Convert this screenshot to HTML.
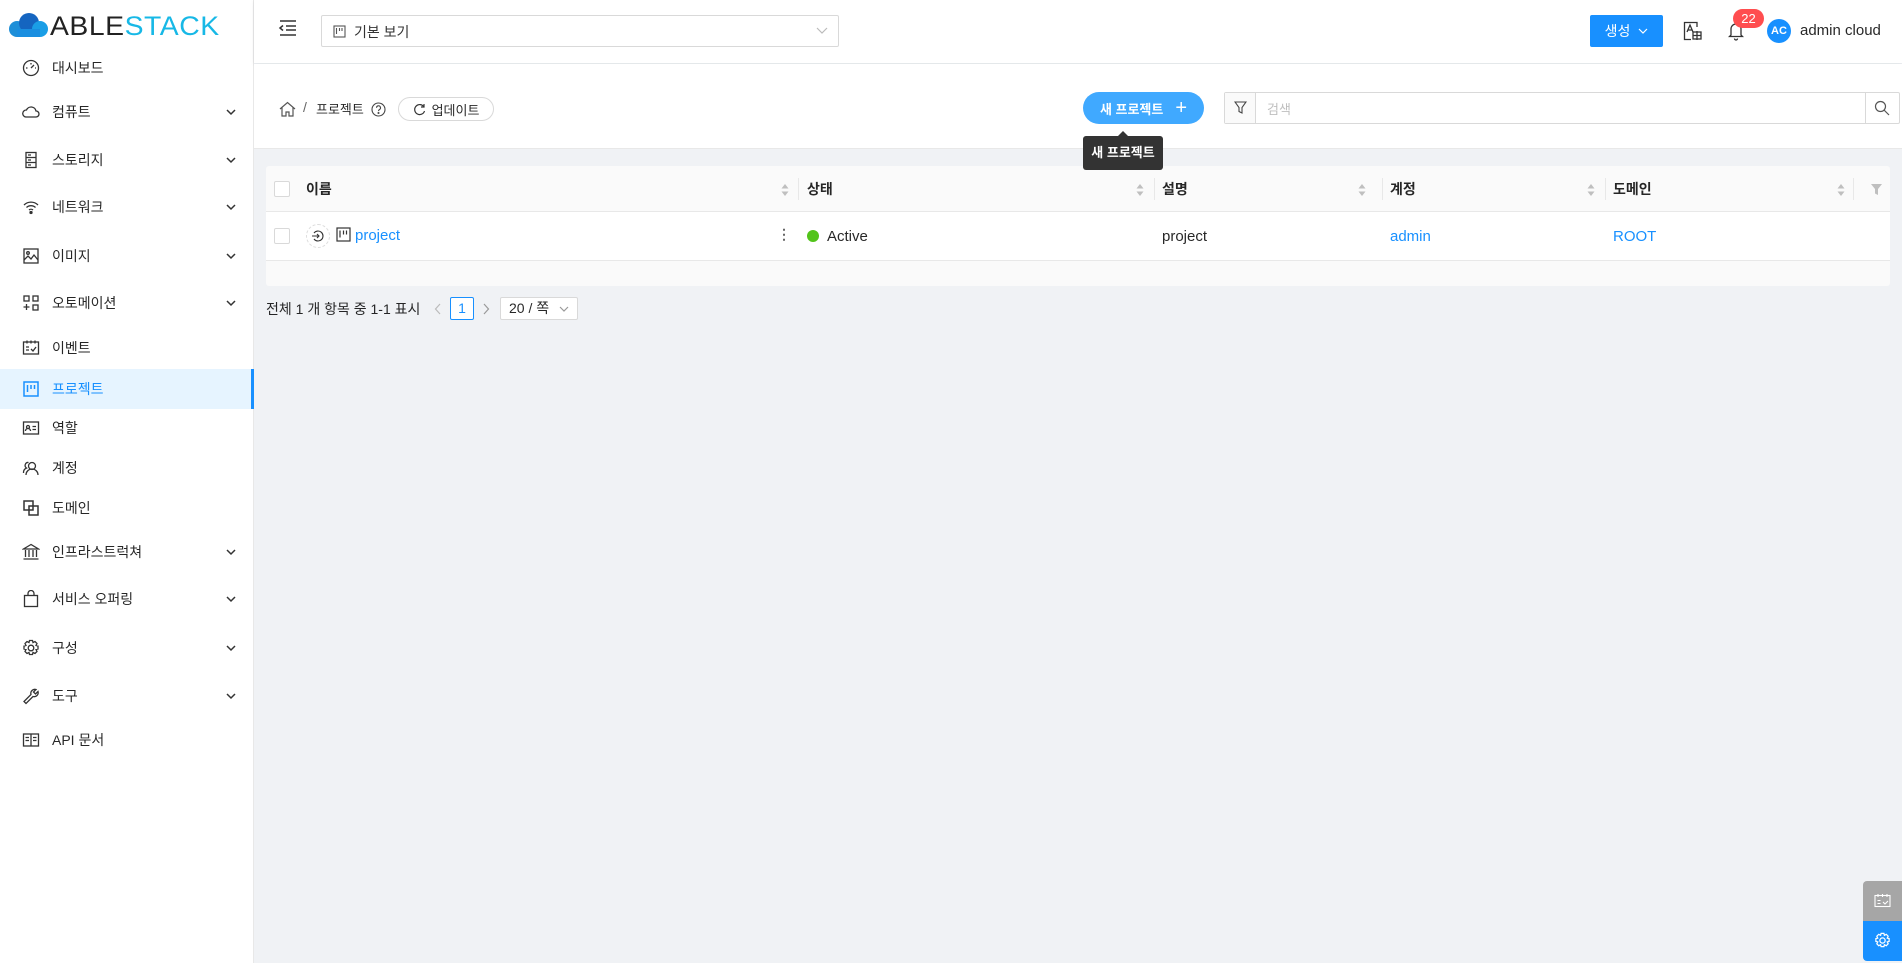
<!DOCTYPE html>
<html><head><meta charset="utf-8"><style>
*{box-sizing:border-box;margin:0;padding:0}
body{width:1902px;height:963px;overflow:hidden;background:#f0f2f5;font-family:"Liberation Sans","Noto Sans CJK KR",sans-serif;font-size:14px;color:rgba(0,0,0,.85);position:relative}
.a{position:absolute}
.side{left:0;top:0;width:254px;height:963px;background:#fff;border-right:1px solid #e8e8e8}
.mi{position:absolute;left:0;width:254px;height:40px;display:flex;align-items:center}
.mi svg{position:absolute;left:22px;width:18px;height:18px}
.mi span{position:absolute;left:52px;font-size:14px}
.mi .ch{position:absolute;left:226px;width:10px;height:10px}
.hdr{left:254px;top:0;width:1648px;height:63px;background:#fff;box-shadow:0 1px 4px rgba(0,21,41,.08)}
.top2{left:254px;top:64px;width:1648px;height:85px;background:#fff;border-bottom:1px solid #e8e8e8}
.th{position:absolute;top:0;height:46px;display:flex;align-items:center;font-weight:bold;font-size:14px}
.sort{position:absolute;top:18px;width:8px;height:12px}
.div{position:absolute;top:12px;width:1px;height:22px;background:#e8e8e8}
.cb{position:absolute;width:16px;height:16px;border:1px solid #d9d9d9;border-radius:2px;background:#fff}
.link{color:#1890ff}
</style></head><body>

<div class="a side">
 <svg class="a" style="left:8px;top:12px" width="42" height="26" viewBox="0 0 42 26"><circle cx="9" cy="17" r="8" fill="#1e8fd8"/><circle cx="21" cy="11" r="10" fill="#1565c0"/><circle cx="32" cy="17" r="8" fill="#1a9ee6"/><rect x="9" y="17" width="23" height="8" fill="#1a8ee0"/></svg>
 <div class="a" style="left:50px;top:11px;font-size:27px;font-weight:normal;letter-spacing:0.5px;line-height:30px;transform:scaleX(1.05);transform-origin:left"><span style="color:#222">ABLE</span><span style="color:#17b8e6">STACK</span></div>

 <div class="mi" style="top:48px"><svg viewBox="0 0 18 18" fill="none" stroke="#333" stroke-width="1.3"><circle cx="9" cy="9" r="7.5"/><path d="M9 9l3-3M4 9h1.5M13 9h1M9 4v1.5"/></svg><span>대시보드</span></div>
 <div class="mi" style="top:92px"><svg viewBox="0 0 18 18" fill="none" stroke="#333" stroke-width="1.3"><path d="M4 14h10a3 3 0 000-6 5 5 0 00-9.5-1A3.5 3.5 0 004 14z"/></svg><span>컴퓨트</span><svg class="ch" viewBox="0 0 10 10" fill="none" stroke="#333" stroke-width="1.5"><path d="M1 3l4 4 4-4"/></svg></div>
 <div class="mi" style="top:140px"><svg viewBox="0 0 18 18" fill="none" stroke="#333" stroke-width="1.3"><rect x="4" y="1.5" width="10" height="15"/><path d="M4 6.5h10M4 11.5h10M6 4h3M6 9h3M6 14h3"/></svg><span>스토리지</span><svg class="ch" viewBox="0 0 10 10" fill="none" stroke="#333" stroke-width="1.5"><path d="M1 3l4 4 4-4"/></svg></div>
 <div class="mi" style="top:187px"><svg viewBox="0 0 18 18" fill="none" stroke="#333" stroke-width="1.3"><path d="M2 7a10 10 0 0114 0M4.5 9.5a6.5 6.5 0 019 0M7 12a3 3 0 014 0"/><circle cx="9" cy="14.5" r="1" fill="#333"/></svg><span>네트워크</span><svg class="ch" viewBox="0 0 10 10" fill="none" stroke="#333" stroke-width="1.5"><path d="M1 3l4 4 4-4"/></svg></div>
 <div class="mi" style="top:236px"><svg viewBox="0 0 18 18" fill="none" stroke="#333" stroke-width="1.3"><rect x="2" y="2" width="14" height="14"/><path d="M2 13l4-4 3 3 3-4 4 5"/><circle cx="6" cy="6" r="1.3"/></svg><span>이미지</span><svg class="ch" viewBox="0 0 10 10" fill="none" stroke="#333" stroke-width="1.5"><path d="M1 3l4 4 4-4"/></svg></div>
 <div class="mi" style="top:283px"><svg viewBox="0 0 18 18" fill="none" stroke="#333" stroke-width="1.3"><rect x="2" y="2" width="5" height="5"/><rect x="11" y="2" width="5" height="5"/><rect x="11" y="11" width="5" height="5"/><path d="M4.5 10v6M1.5 13h6"/></svg><span>오토메이션</span><svg class="ch" viewBox="0 0 10 10" fill="none" stroke="#333" stroke-width="1.5"><path d="M1 3l4 4 4-4"/></svg></div>
 <div class="mi" style="top:328px"><svg viewBox="0 0 18 18" fill="none" stroke="#333" stroke-width="1.3"><rect x="1.5" y="3" width="15" height="12"/><path d="M5 1.5v3M9 1.5v3M13 1.5v3M4 8h3M4 11h3M9 10l2 2 3-4"/></svg><span>이벤트</span></div>
 <div class="a" style="left:0;top:369px;width:254px;height:40px;background:#e6f4ff;border-right:3px solid #1890ff"></div>
 <div class="mi" style="top:369px"><svg viewBox="0 0 18 18" fill="none" stroke="#1890ff" stroke-width="1.5"><rect x="2" y="2" width="14" height="14"/><path d="M5.5 5v7M9 5v4M12.5 5v4"/></svg><span style="color:#1890ff">프로젝트</span></div>
 <div class="mi" style="top:408px"><svg viewBox="0 0 18 18" fill="none" stroke="#333" stroke-width="1.3"><rect x="1.5" y="3" width="15" height="12"/><circle cx="6" cy="8" r="1.5"/><path d="M3.5 12a2.5 2.5 0 015 0M10.5 7.5h3.5M10.5 10.5h3.5"/></svg><span>역할</span></div>
 <div class="mi" style="top:448px"><svg viewBox="0 0 18 18" fill="none" stroke="#333" stroke-width="1.3"><circle cx="10" cy="7" r="3.5"/><path d="M4 16a6 6 0 0112 0M6.5 3.5a3 3 0 00-2 5.5A5 5 0 001.5 14"/></svg><span>계정</span></div>
 <div class="mi" style="top:488px"><svg viewBox="0 0 18 18" fill="none" stroke="#333" stroke-width="1.5"><rect x="2" y="2" width="9" height="9"/><rect x="7" y="7" width="9" height="9"/></svg><span>도메인</span></div>
 <div class="mi" style="top:532px"><svg viewBox="0 0 18 18" fill="none" stroke="#333" stroke-width="1.3"><path d="M9 1.5L1.5 6h15zM3.5 7v7M7 7v7M11 7v7M14.5 7v7M1.5 16h15"/></svg><span>인프라스트럭쳐</span><svg class="ch" viewBox="0 0 10 10" fill="none" stroke="#333" stroke-width="1.5"><path d="M1 3l4 4 4-4"/></svg></div>
 <div class="mi" style="top:579px"><svg viewBox="0 0 18 18" fill="none" stroke="#333" stroke-width="1.3"><rect x="2.5" y="5.5" width="13" height="11"/><path d="M6 5.5V3.5a3 3 0 016 0v2"/></svg><span>서비스 오퍼링</span><svg class="ch" viewBox="0 0 10 10" fill="none" stroke="#333" stroke-width="1.5"><path d="M1 3l4 4 4-4"/></svg></div>
 <div class="mi" style="top:628px"><svg viewBox="0 0 18 18" fill="none" stroke="#333" stroke-width="1.3"><circle cx="9" cy="9" r="2.8"/><path d="M7.5 1.5h3l.5 2 2-1 2 2-1 2 2 .5v3l-2 .5 1 2-2 2-2-1-.5 2h-3l-.5-2-2 1-2-2 1-2-2-.5v-3l2-.5-1-2 2-2 2 1z"/></svg><span>구성</span><svg class="ch" viewBox="0 0 10 10" fill="none" stroke="#333" stroke-width="1.5"><path d="M1 3l4 4 4-4"/></svg></div>
 <div class="mi" style="top:676px"><svg viewBox="0 0 18 18" fill="none" stroke="#333" stroke-width="1.3"><path d="M2 14.5l7-7a4 4 0 015-5l-2.5 2.5 2 2L16 4.5a4 4 0 01-5 5l-7 7z"/></svg><span>도구</span><svg class="ch" viewBox="0 0 10 10" fill="none" stroke="#333" stroke-width="1.5"><path d="M1 3l4 4 4-4"/></svg></div>
 <div class="mi" style="top:720px"><svg viewBox="0 0 18 18" fill="none" stroke="#333" stroke-width="1.3"><rect x="1.5" y="3" width="15" height="12"/><path d="M9 3v12M3.5 6.5h3.5M3.5 9.5h3.5M11 6.5h3.5M11 9.5h3.5"/></svg><span>API 문서</span></div>
</div>

<div class="a hdr">
 <svg class="a" style="left:24px;top:19px" width="20" height="18" viewBox="0 0 20 18" fill="none" stroke="#333" stroke-width="1.5"><path d="M2 2h16M8 7h10M8 11h10M2 16h16M5 6.5L2 9l3 2.5"/></svg>
 <div class="a" style="left:67px;top:15px;width:518px;height:32px;border:1px solid #d9d9d9;border-radius:2px">
  <svg class="a" style="left:11px;top:9px" width="13" height="13" viewBox="0 0 13 13" fill="none" stroke="#555" stroke-width="1.1"><rect x="1" y="1" width="11" height="11"/><path d="M3.5 3v6M6.5 3v3M9 3v3"/></svg>
  <span class="a" style="left:32px;top:6px;color:#333">기본 보기</span>
  <svg class="a" style="right:10px;top:11px" width="12" height="8" viewBox="0 0 12 8" fill="none" stroke="#bbb" stroke-width="1.2"><path d="M1 1l5 5 5-5"/></svg>
 </div>
 <div class="a" style="left:1336px;top:15px;width:73px;height:32px;background:#1890ff;border-radius:2px;color:#fff;display:flex;align-items:center;justify-content:center;gap:8px">생성 <svg width="10" height="7" viewBox="0 0 10 7" fill="none" stroke="#fff" stroke-width="1.2"><path d="M1 1l4 4 4-4"/></svg></div>
 <svg class="a" style="left:1429px;top:21px" width="20" height="20" viewBox="0 0 20 20" fill="none" stroke="#333" stroke-width="1.3"><path d="M14 6V1.5H1.5v17H8"/><path d="M4 11l3-7 3 7M5 9h4"/><rect x="10" y="11" width="8" height="7"/><path d="M14 10v9M10 14.5h8"/></svg>
 <svg class="a" style="left:1474px;top:21px" width="16" height="20" viewBox="0 0 16 20" fill="none" stroke="#333" stroke-width="1.3"><path d="M3 14V8a5 5 0 0110 0v6l1.5 1.5h-13zM6.5 17.5a1.5 1.5 0 003 0"/></svg>
 <div class="a" style="left:1479px;top:9px;width:31px;height:19px;border-radius:10px;background:#ff4d4f;color:#fff;font-size:13px;text-align:center;line-height:19px">22</div>
 <div class="a" style="left:1513px;top:19px;width:24px;height:24px;border-radius:50%;background:#1890ff;color:#fff;font-size:11px;font-weight:bold;text-align:center;line-height:24px">AC</div>
 <span class="a" style="left:1546px;top:22px;font-size:15px">admin cloud</span>
</div>

<div class="a top2">
 <svg class="a" style="left:25px;top:37px" width="17" height="16" viewBox="0 0 17 16" fill="none" stroke="#555" stroke-width="1.2"><path d="M1 8l7.5-6.5L16 8M3 6.5V15h4v-4h3v4h4V6.5"/></svg>
 <span class="a" style="left:49px;top:35px;color:#666">/</span>
 <span class="a" style="left:62px;top:35px;font-size:13px">프로젝트</span>
 <svg class="a" style="left:117px;top:38px" width="15" height="15" viewBox="0 0 15 15" fill="none" stroke="#444" stroke-width="1.1"><circle cx="7.5" cy="7.5" r="6.5"/><path d="M5.5 5.8a2 2 0 113 1.7c-.8.4-1 .8-1 1.6"/><circle cx="7.5" cy="11" r=".5" fill="#444"/></svg>
 <div class="a" style="left:144px;top:33px;width:96px;height:24px;border:1px solid #d9d9d9;border-radius:12px;display:flex;align-items:center;justify-content:center;gap:6px;font-size:13px"><svg width="13" height="13" viewBox="0 0 13 13" fill="none" stroke="#333" stroke-width="1.2"><path d="M11 4a5 5 0 10.5 4M11 1v3H8"/></svg>업데이트</div>
 <div class="a" style="left:829px;top:28px;width:121px;height:32px;border-radius:16px;background:#40a9ff;color:#fff;font-weight:bold;font-size:13px;display:flex;align-items:center;justify-content:center;gap:12px">새 프로젝트 <span style="font-weight:normal;font-size:20px;line-height:10px">+</span></div>
 <div class="a" style="left:829px;top:72px;width:80px;height:34px;border-radius:3px;background:#333;color:#fff;font-size:13px;font-weight:bold;text-align:center;line-height:34px;z-index:2">새 프로젝트</div>
 <div class="a" style="left:864px;top:67px;width:0;height:0;border-left:5px solid transparent;border-right:5px solid transparent;border-bottom:5px solid #333"></div>
 <div class="a" style="left:970px;top:28px;width:676px;height:32px;border:1px solid #d9d9d9;border-radius:2px;background:#fff">
  <div class="a" style="left:0;top:0;width:31px;height:30px;border-right:1px solid #d9d9d9;background:#fafafa"></div>
  <svg class="a" style="left:9px;top:8px" width="13" height="14" viewBox="0 0 13 14" fill="none" stroke="#444" stroke-width="1.1"><path d="M1 1h11L8 6.5V12l-3-1.5v-4z"/></svg>
  <span class="a" style="left:42px;top:6px;color:#bfbfbf;font-size:13px">검색</span>
  <div class="a" style="right:0;top:0;width:34px;height:30px;border-left:1px solid #d9d9d9"></div>
  <svg class="a" style="right:9px;top:7px" width="16" height="16" viewBox="0 0 16 16" fill="none" stroke="#555" stroke-width="1.2"><circle cx="6.5" cy="6.5" r="5"/><path d="M10 10l5 5"/></svg>
 </div>
</div>

<div class="a" style="left:266px;top:166px;width:1624px;height:120px;background:#fafafa;border-radius:3px">
 <div class="a" style="left:0;top:0;width:1624px;height:46px;border-bottom:1px solid #e8e8e8"></div>
 <div class="cb" style="left:8px;top:15px"></div>
 <div class="th" style="left:40px">이름</div>
 <svg class="sort" style="left:515px" viewBox="0 0 8 12" fill="#bfbfbf"><path d="M4 0l3.5 4.5h-7zM4 12L.5 7.5h7z"/></svg>
 <div class="div" style="left:532px"></div>
 <div class="th" style="left:541px">상태</div>
 <svg class="sort" style="left:870px" viewBox="0 0 8 12" fill="#bfbfbf"><path d="M4 0l3.5 4.5h-7zM4 12L.5 7.5h7z"/></svg>
 <div class="div" style="left:888px"></div>
 <div class="th" style="left:896px">설명</div>
 <svg class="sort" style="left:1092px" viewBox="0 0 8 12" fill="#bfbfbf"><path d="M4 0l3.5 4.5h-7zM4 12L.5 7.5h7z"/></svg>
 <div class="div" style="left:1116px"></div>
 <div class="th" style="left:1124px">계정</div>
 <svg class="sort" style="left:1321px" viewBox="0 0 8 12" fill="#bfbfbf"><path d="M4 0l3.5 4.5h-7zM4 12L.5 7.5h7z"/></svg>
 <div class="div" style="left:1339px"></div>
 <div class="th" style="left:1347px">도메인</div>
 <svg class="sort" style="left:1571px" viewBox="0 0 8 12" fill="#bfbfbf"><path d="M4 0l3.5 4.5h-7zM4 12L.5 7.5h7z"/></svg>
 <div class="div" style="left:1587px"></div>
 <svg class="a" style="left:1605px;top:18px" width="11" height="11" viewBox="0 0 11 11" fill="#bfbfbf"><path d="M0 0h11L7 5v6L4 9.5V5z"/></svg>

 <div class="a" style="left:0;top:46px;width:1624px;height:49px;background:#fff;border-bottom:1px solid #e8e8e8"></div>
 <div class="cb" style="left:8px;top:62px"></div>
 <div class="a" style="left:40px;top:58px;width:24px;height:24px;border:1px dashed #ddd;border-radius:50%"></div>
 <svg class="a" style="left:45px;top:63px" width="14" height="14" viewBox="0 0 14 14" fill="none" stroke="#333" stroke-width="1.1"><path d="M3 4a5 5 0 110 6M1 7h7M6 5l2 2-2 2"/></svg>
 <svg class="a" style="left:70px;top:61px" width="15" height="15" viewBox="0 0 15 15" fill="none" stroke="#333" stroke-width="1.2"><rect x="1" y="1" width="13" height="13"/><path d="M4 3.5v7M7.5 3.5v4M10.5 3.5v4"/></svg>
 <span class="a link" style="left:89px;top:61px;font-size:15px">project</span>
 <span class="a" style="left:511px;top:60px;color:#666;font-size:14px;font-weight:bold">⋮</span>
 <div class="a" style="left:541px;top:64px;width:12px;height:12px;border-radius:50%;background:#52c41a"></div>
 <span class="a" style="left:561px;top:62px;font-size:15px">Active</span>
 <span class="a" style="left:896px;top:62px;font-size:15px">project</span>
 <span class="a link" style="left:1124px;top:62px;font-size:15px">admin</span>
 <span class="a link" style="left:1347px;top:62px;font-size:15px">ROOT</span>
</div>

<span class="a" style="left:266px;top:299px;font-size:14px">전체 1 개 항목 중 1-1 표시</span>
<svg class="a" style="left:434px;top:303px" width="8" height="12" viewBox="0 0 8 12" fill="none" stroke="#bbb" stroke-width="1.2"><path d="M6 1L1.5 6 6 11"/></svg>
<div class="a" style="left:450px;top:297px;width:24px;height:23px;border:1px solid #1890ff;border-radius:2px;color:#1890ff;background:#fff;text-align:center;line-height:21px;font-size:14px">1</div>
<svg class="a" style="left:482px;top:303px" width="8" height="12" viewBox="0 0 8 12" fill="none" stroke="#999" stroke-width="1.2"><path d="M2 1l4.5 5L2 11"/></svg>
<div class="a" style="left:500px;top:297px;width:78px;height:23px;border:1px solid #d9d9d9;border-radius:2px;background:#fff;font-size:14px;line-height:21px;padding-left:8px">20 / 쪽 <svg style="position:absolute;right:8px;top:8px" width="10" height="7" viewBox="0 0 10 7" fill="none" stroke="#999" stroke-width="1.2"><path d="M1 1l4 4 4-4"/></svg></div>

<div class="a" style="left:1863px;top:881px;width:39px;height:40px;background:#a6a6a6;border-radius:4px 0 0 0"></div>
<svg class="a" style="left:1874px;top:893px" width="17" height="15" viewBox="0 0 17 15" fill="none" stroke="#fff" stroke-width="1.1"><rect x="1" y="2.5" width="15" height="11"/><path d="M4 1v3M8.5 1v3M13 1v3M3.5 7.5h3M3.5 10.5h3M9 9l2 2 3-3"/></svg>
<div class="a" style="left:1863px;top:921px;width:39px;height:40px;background:#1890ff;border-radius:0 0 0 4px"></div>
<svg class="a" style="left:1874px;top:932px" width="17" height="17" viewBox="0 0 18 18" fill="none" stroke="#fff" stroke-width="1.3"><circle cx="9" cy="9" r="2.8"/><path d="M7.5 1.5h3l.5 2 2-1 2 2-1 2 2 .5v3l-2 .5 1 2-2 2-2-1-.5 2h-3l-.5-2-2 1-2-2 1-2-2-.5v-3l2-.5-1-2 2-2 2 1z"/></svg>
</body></html>
